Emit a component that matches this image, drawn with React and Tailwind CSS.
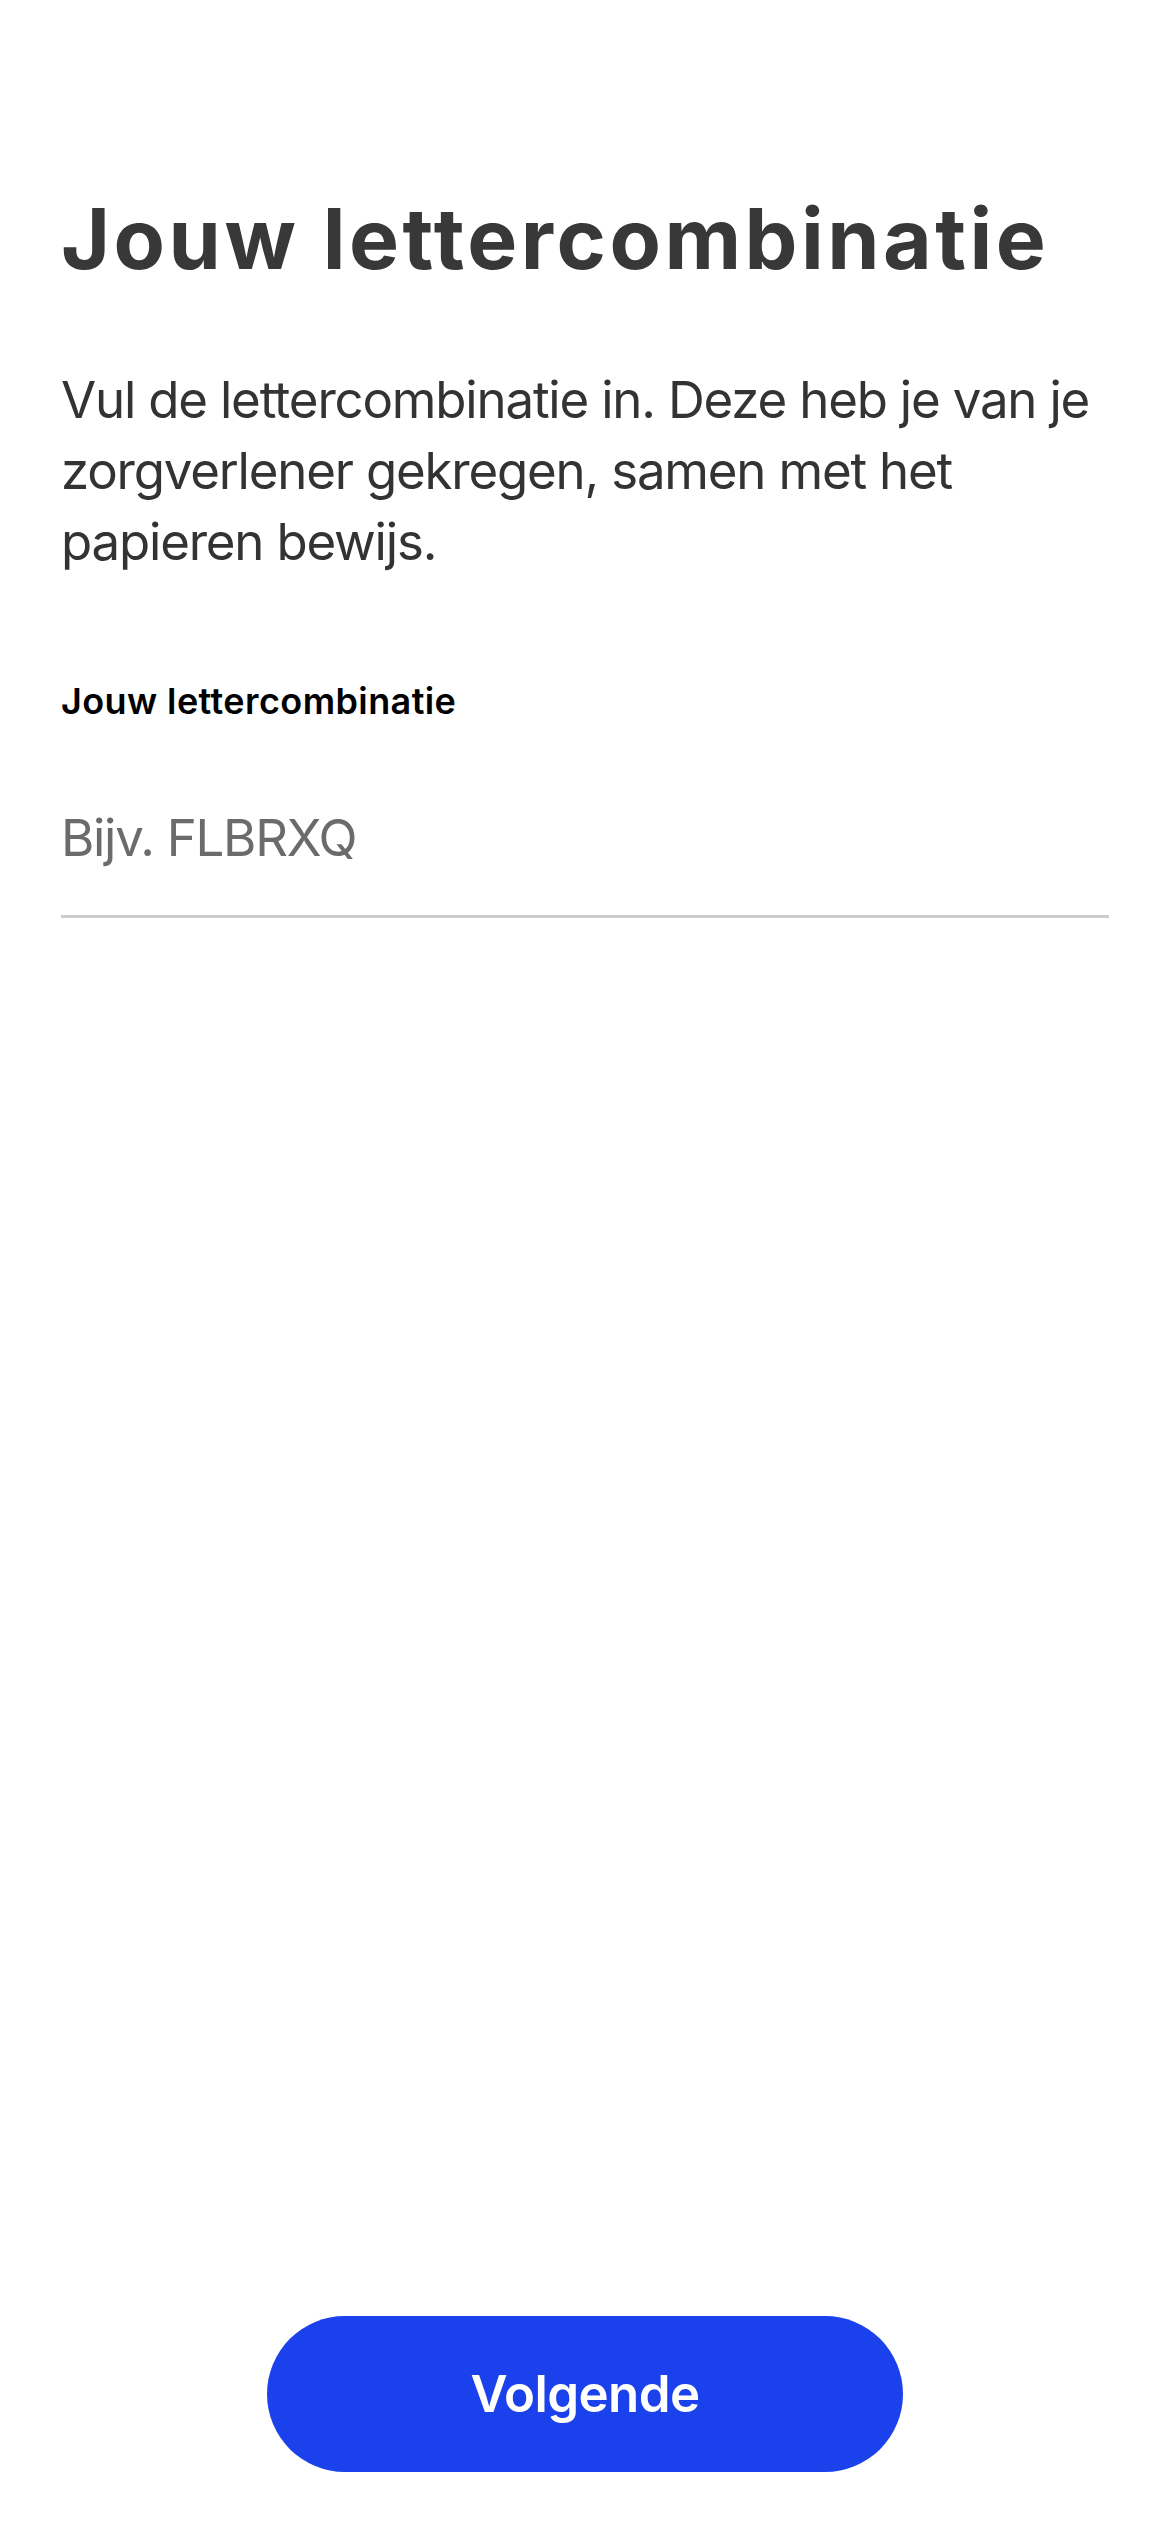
export default function App() {
  return (
    <div className="h-[2532px] w-full bg-white flex flex-col px-[61px]" style={{ fontFamily: "Inter, 'Noto Sans', sans-serif" }}>
      <h1 className="mt-[189px] text-[84px] leading-[100px] font-bold text-[#383838] tracking-[3.5px]">
        Jouw lettercombinatie
      </h1>
      <p className="mt-[75px] text-[51px] leading-[71px] text-[#333333] tracking-[-1.2px]">
        Vul de lettercombinatie in. Deze heb je van je zorgverlener gekregen, samen met het papieren bewijs.
      </p>
      <label className="mt-[102px] text-[36px] leading-[44px] font-semibold text-black tracking-[0.4px]">
        Jouw lettercombinatie
      </label>
      <div className="mt-[79px] pb-[42px] border-b-[3px] border-[#cccccc]">
        <span className="block text-[51px] leading-[71px] text-[#6b6b6b] tracking-[-1.3px]">Bijv. FLBRXQ</span>
      </div>
      <div className="flex-1" />
      <div className="flex justify-center mb-[60px]">
        <button className="w-[636px] h-[156px] rounded-full bg-[#1a41eb] text-white text-[51px] font-semibold tracking-[-0.6px]">
          Volgende
        </button>
      </div>
    </div>
  );
}
